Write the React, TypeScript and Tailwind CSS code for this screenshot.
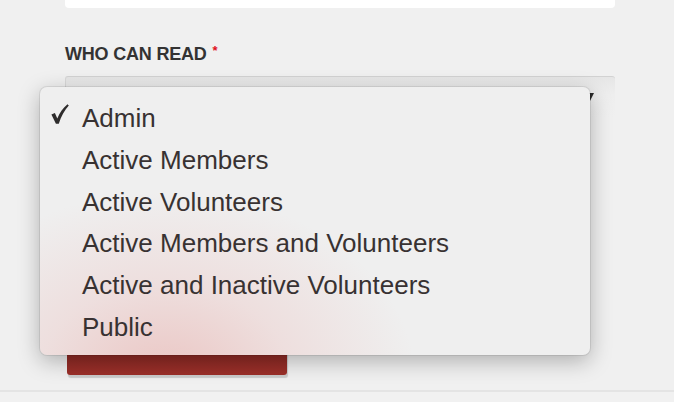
import React from "react";

const options = [
  "Admin",
  "Active Members",
  "Active Volunteers",
  "Active Members and Volunteers",
  "Active and Inactive Volunteers",
  "Public",
];

function Check() {
  return (
    <svg width="18" height="20" viewBox="0 0 18 20" className="absolute left-[11px] top-[6px]">
      <path
        d="M0.4 10.4 L3.9 9.0 L6.3 14.4 C8.7 8.8 12 4.0 16.5 0.3 L17.8 1.5 C13.6 6.1 10.2 12.1 7.8 19.7 L4.9 19.7 Z"
        fill="#2e2c2c"
      />
    </svg>
  );
}

export default function App() {
  return (
    <div
      className="relative w-[674px] h-[402px] overflow-hidden bg-[#f0f0f0] flex flex-col"
      style={{ fontFamily: '"Liberation Sans", Arial, Helvetica, sans-serif' }}
    >
      <div className="pl-[65px] w-[615px] flex flex-col">
        {/* previous field */}
        <div className="h-[8px] bg-white rounded-b-[4px]" />

        <label className="mt-[33px] h-[20px] leading-[20px] text-[18px] font-bold text-[#333333] tracking-[-0.2px]">
          WHO CAN READ
          <span className="ml-[6px] text-[13px] text-[#e0121b] align-[5px]">*</span>
        </label>

        {/* select control */}
        <div className="relative mt-[15px] h-[60px] rounded-t-[3px] border-t border-l border-t-[#d2d2d2] border-l-[#d8d8d8] bg-[linear-gradient(#e6e6e6,#eeeeee_30%,#f0f0f0_70%)]">
          <div className="absolute left-[520px] top-[16px] w-0 h-0 border-l-[4px] border-r-[4px] border-t-[8px] border-l-transparent border-r-transparent border-t-[#2a2a2a]" />
        </div>

        {/* submit button */}
        <div className="ml-[2px] mt-[195px] w-[220px] h-[44px] rounded-b-[3px] bg-[linear-gradient(#7c2420,#9b2f29)] shadow-[1px_3px_1px_rgba(0,0,0,0.16)]" />
      </div>

      <div className="mt-[15px] h-[2px] w-full bg-[#e4e4e4]" />
      <div className="flex-1 bg-[#f1f1f1]" />

      {/* open option menu */}
      <div className="absolute left-[40px] top-[87px] w-[550px] h-[268px] rounded-[7px] overflow-hidden bg-[#efefef] shadow-[0_0_0_1px_rgba(0,0,0,0.08),0_6px_22px_rgba(0,0,0,0.28)]">
        <div className="absolute inset-0 bg-[radial-gradient(ellipse_250px_185px_at_125px_290px,rgba(232,172,168,0.62),rgba(236,196,194,0.38)_50%,rgba(239,239,239,0)_100%)]" />
        <ul className="relative pt-[11px] text-[26px] leading-[41.8px] text-[#383232]">
          {options.map((o, i) => (
            <li key={o} className="relative pl-[42px] h-[41.8px] whitespace-nowrap">
              {i === 0 && <Check />}
              {o}
            </li>
          ))}
        </ul>
      </div>
    </div>
  );
}
